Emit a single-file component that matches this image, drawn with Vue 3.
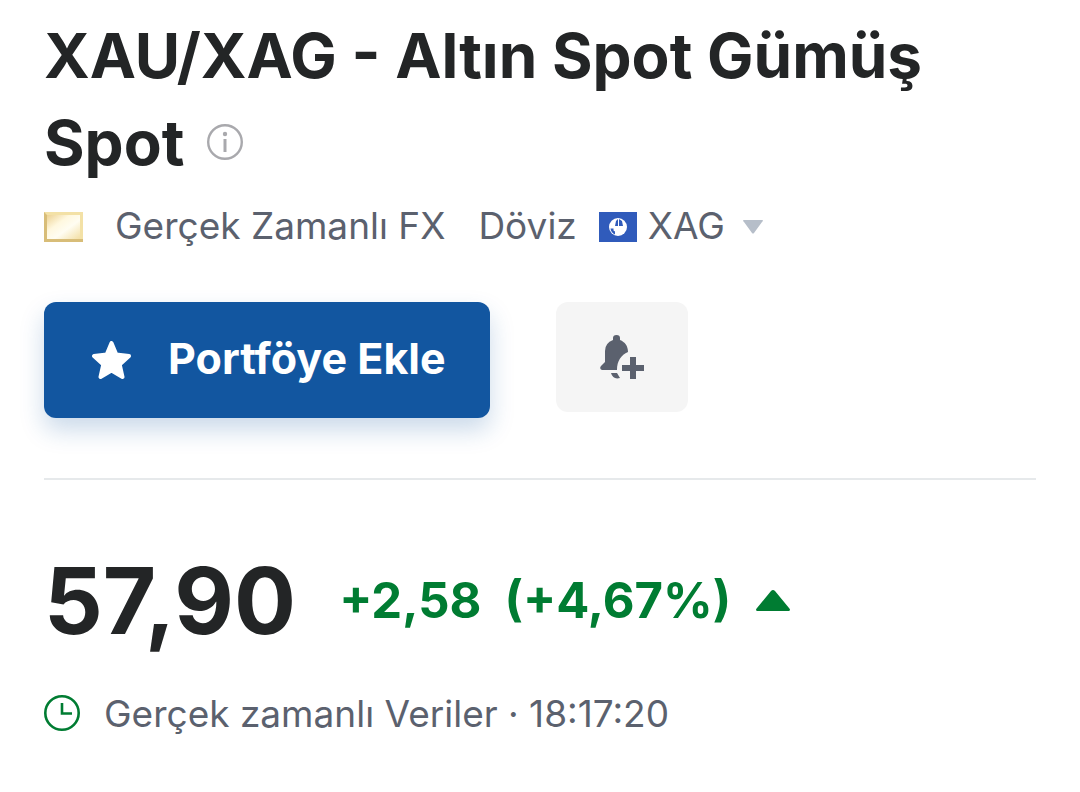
<script setup>
const quote = { price: '57,90', change: '+2,58', percent: '(+4,67%)', time: '18:17:20' }
</script>

<template>
  <main class="quote">
    <h1>
      XAU/XAG - Altın Spot Gümüş Spot
      <button class="info" aria-label="Bilgi">
        <svg viewBox="0 0 36 36"><circle cx="18" cy="18" r="16.800" fill="none" stroke="#a9a9ad" stroke-width="2.400" /><path d="M18 15v13" stroke="#a9a9ad" stroke-width="3" /><circle cx="18" cy="10" r="2.200" fill="#a9a9ad" /></svg>
      </button>
    </h1>

    <div class="meta">
      <svg class="gold" viewBox="0 0 39 30">
        <defs><linearGradient id="gold" x1="0" y1="0" x2="1" y2="1"><stop offset="0" stop-color="#ecd192" /><stop offset=".35" stop-color="#fff8df" /><stop offset=".6" stop-color="#fffdf2" /><stop offset="1" stop-color="#f3dfa4" /></linearGradient></defs>
        <path fill="#f3e1a6" d="M0 0h39v30H0z" /><path fill="#d8bd78" d="M0 0l3 3v24h36v3H0z" /><path fill="url(#gold)" d="M3 3h33v24H3z" />
      </svg>
      <span class="feed">Gerçek Zamanlı FX</span>
      <span class="kind">Döviz</span>
      <button class="currency">
        <svg class="flag" viewBox="0 0 38 30"><path fill="#305bbb" d="M0 0h38v30H0z" /><circle cx="19" cy="15" r="9" fill="#fff" /><path fill="#305bbb" d="M16 14l1-5 2-2v7zM20 14V7l3 2 1 5zM11.500 16.500h3v2l1.500 1v3q-4-2-4.500-6" /></svg>
        <span>XAG</span>
        <svg class="caret" viewBox="0 0 20 14"><path fill="#b6bec9" d="M1 0h18q2 0 0 2L11 13q-1 1-2 0L1 2q-2-2 0-2" /></svg>
      </button>
    </div>

    <div class="actions">
      <button class="add">
        <svg viewBox="0 0 40 38"><path fill="#fff" stroke="#fff" stroke-width="4" stroke-linejoin="round" d="M19.500 2l4.800 11.500L37 15l-9.300 8.500L30.500 36l-11-6.500L8.500 36l2.800-12.500L2 15l12.700-1.500z" /></svg>
        <span>Portföye Ekle</span>
      </button>
      <button class="alert" aria-label="Alarm oluştur">
        <svg viewBox="0 0 44 44"><path fill="#5b616e" d="M13 5V3q0-3 3.500-3T20 3v2c5 2 8 6 8 12-7 3-11 9-11 18H2q-3-1-1-4l4-4V16Q5 8 13 5M11 38h6l3 5q-7 2-9-5M30 22h6v8h8v6h-8v8h-6v-8h-8v-6h8z" /></svg>
      </button>
    </div>

    <section class="values">
      <div class="line">
        <strong class="price">{{ quote.price }}</strong>
        <span class="change">{{ quote.change }}</span>
        <span class="percent">{{ quote.percent }}</span>
        <svg class="up" viewBox="0 0 36 21"><path fill="#007c32" d="M2 21Q0 20 2 18L16 1q2-2 4 0l14 17q2 2 0 3z" /></svg>
      </div>
      <div class="status">
        <svg viewBox="0 0 36 36"><circle cx="18" cy="18" r="16.700" fill="none" stroke="#007c32" stroke-width="2.600" /><path fill="none" stroke="#007c32" stroke-width="2.600" d="M18 8v10.500h10" /></svg>
        <span>Gerçek zamanlı Veriler · {{ quote.time }}</span>
      </div>
    </section>
  </main>
</template>

<style>
body { margin: 0; background: #fff; }
</style>

<style scoped>
.quote { padding: 12px 44px 48px; font-family: Inter, sans-serif; color: #232526; }
button { border: 0; padding: 0; background: none; font: inherit; color: inherit; cursor: pointer; }
svg { display: block; flex: none; }
h1 { margin: 0; max-width: 920px; font-size: 62px; line-height: 87px; font-weight: 700; }
.info { margin-left: 8px; padding-bottom: 12px; vertical-align: middle; line-height: 0; }
.info svg { width: 36px; height: 36px; }
.meta { display: flex; align-items: center; margin-top: 17px; height: 48px; font-size: 37px; line-height: 46px; color: #5b616e; }
.meta span { padding-bottom: 2px; }
.gold { width: 39px; height: 30px; }
.feed { margin-left: 32px; }
.kind { margin-left: 33px; }
.currency { display: flex; align-items: center; margin-left: 22px; }
.flag { width: 38px; height: 30px; margin-right: 11px; }
.caret { width: 20px; height: 14px; margin-left: 18px; }
.actions { display: flex; align-items: flex-start; gap: 66px; margin-top: 51px; padding-bottom: 60px; border-bottom: 2px solid #e6e9eb; }
.add { display: flex; align-items: center; gap: 36px; height: 116px; padding: 0 44px 0 48px; border-radius: 12px; background: #1256a0; color: #fff; font-size: 43px; font-weight: 700; box-shadow: 0 12px 24px rgba(18, 86, 160, .22); }
.add svg { width: 40px; height: 38px; }
.add span { padding-bottom: 4px; }
.alert { display: grid; place-items: center; width: 132px; height: 110px; border-radius: 12px; background: #f5f5f5; }
.alert svg { width: 44px; height: 44px; }
.values { padding-top: 66px; }
.line { display: flex; align-items: center; height: 108px; color: #007c32; font-size: 49px; font-weight: 700; }
.price { font-size: 92px; font-weight: 700; color: #232526; }
.change { margin-left: 43px; }
.percent { margin-left: 23px; }
.up { width: 36px; height: 21px; margin-left: 24px; }
.status { display: flex; align-items: center; gap: 24px; height: 48px; margin-top: 35px; font-size: 37px; color: #5b616e; }
.status svg { width: 36px; height: 36px; }
</style>
